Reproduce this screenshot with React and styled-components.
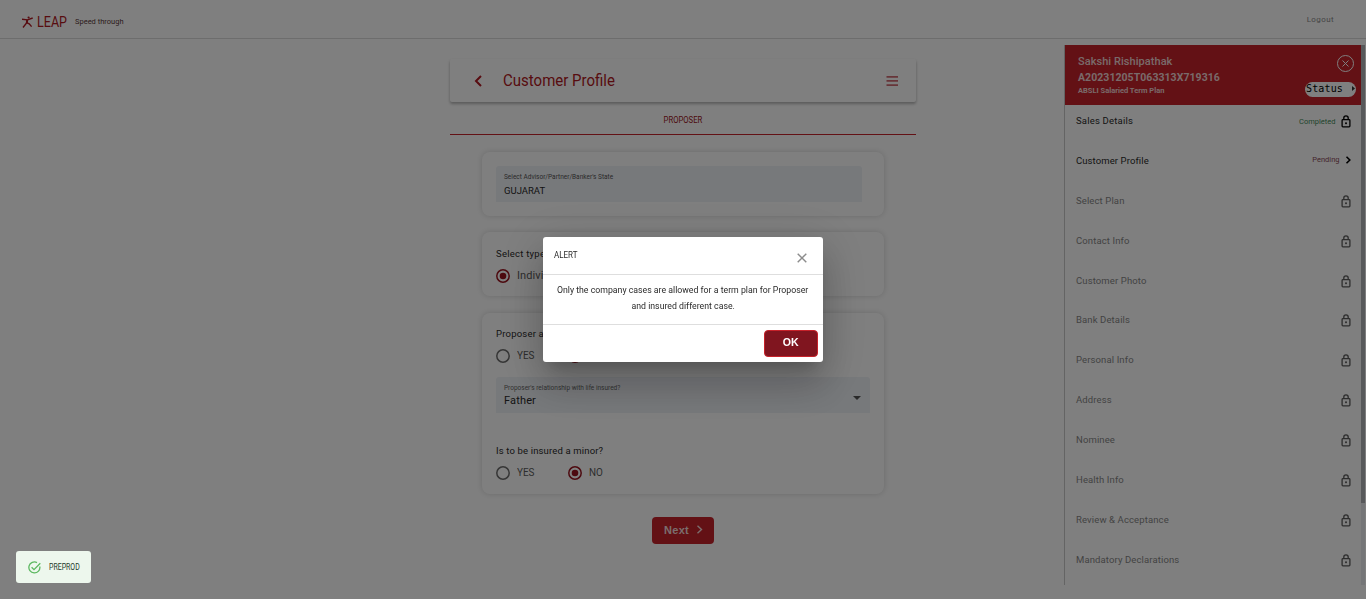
import React from "react";
import styled, { createGlobalStyle } from "styled-components";

const Global = createGlobalStyle`
  * { box-sizing: border-box; }
  body { margin: 0; background: #fff; overflow: hidden; font-family: Roboto, "Liberation Sans", sans-serif; }
  svg { display: block; flex: none; }
`;

const Text = styled.span`
  display: block;
  white-space: nowrap;
  font-family: ${(p) => p.$family || "inherit"};
  font-size: ${(p) => p.$size || 9.5}px;
  line-height: ${(p) => p.$line || 14}px;
  font-weight: ${(p) => p.$weight || 400};
  letter-spacing: ${(p) => p.$track || 0}px;
  color: ${(p) => p.$color || "#2a2a2a"};
  transform: ${(p) => (p.$squeeze ? `scaleX(${p.$squeeze})` : "none")};
  transform-origin: ${(p) => p.$origin || "left"} center;
`;

const Page = styled.div`
  height: 599px;
  display: flex;
  flex-direction: column;
`;
const TopBar = styled.header`
  height: 39px;
  flex: none;
  display: flex;
  align-items: center;
  padding: 5px 32px 0 22px;
  border-bottom: 1px solid #dadada;
`;
const Brand = styled.div`
  display: flex;
  align-items: center;
  gap: 4px;
  width: 53px;
`;
const Logout = styled.div`
  margin-left: auto;
  padding-bottom: 4px;
`;
const Body = styled.div`
  flex: 1;
  display: flex;
  padding-left: 450px;
`;
const Column = styled.main`
  width: 466px;
  padding-top: 20px;
`;
const TitleBar = styled.div`
  height: 43px;
  display: flex;
  align-items: center;
  padding: 0 18px 0 24px;
  border-radius: 2px;
  box-shadow: 0 2px 3px rgba(0, 0, 0, 0.26), 0 1px 4px rgba(0, 0, 0, 0.06);
`;
const TitleText = styled(Text)`
  margin-left: 20px;
  flex: 1;
`;
const Tab = styled.div`
  height: 33px;
  display: flex;
  justify-content: center;
  padding-top: 11px;
  border-bottom: 1px solid #c7222a;
`;
const Cards = styled.div`
  display: flex;
  flex-direction: column;
  gap: 16px;
  padding: 17px 32px 0;
`;
const Card = styled.section`
  height: ${(p) => p.$h}px;
  margin-top: ${(p) => p.$top || 0}px;
  padding: ${(p) => p.$pad || 14}px 14px 0;
  border-radius: 8px;
  box-shadow: 0 0 6px rgba(0, 0, 0, 0.16);
`;
const Field = styled.div`
  width: ${(p) => p.$w}px;
  height: 36px;
  display: flex;
  align-items: center;
  justify-content: space-between;
  padding: 0 9px 1px 8px;
  border-radius: 3px 3px 0 0;
  background: #eff2f7;
`;
const Caret = styled.svg`
  margin-top: 6px;
`;
const RadioRow = styled.div`
  display: flex;
  margin-top: 8px;
`;
const RadioItem = styled.div`
  width: 72px;
  display: flex;
  align-items: center;
  gap: 7px;
`;
const Question = styled.div`
  margin-top: ${(p) => p.$top || 0}px;
`;
const NextButton = styled.button`
  width: 62px;
  height: 27px;
  margin: 23px auto 0;
  display: flex;
  align-items: center;
  justify-content: space-between;
  padding: 0 11px 2px 12px;
  border: 0;
  border-radius: 4px;
  background: #c7222a;
`;
const Side = styled.aside`
  width: 301px;
  height: 540px;
  margin: 6px 1px 0 auto;
  display: flex;
  border-left: 1px solid #c8c8c8;
`;
const SideMain = styled.div`
  width: 296px;
`;
const SideHead = styled.div`
  height: 60px;
  display: flex;
  justify-content: space-between;
  padding: 9px 5px 0 13px;
  background: #c7222a;
`;
const SideActions = styled.div`
  display: flex;
  flex-direction: column;
  align-items: flex-end;
  gap: 9px;
`;
const CircleClose = styled.svg`
  margin-right: 1px;
`;
const Status = styled.button`
  width: 51px;
  height: 15px;
  display: flex;
  align-items: center;
  justify-content: space-between;
  padding: 0 1px 2px 1px;
  border: 0;
  border-radius: 8px;
  background: #fff;
`;
const Row = styled.div`
  height: 39.9px;
  display: flex;
  align-items: flex-start;
  padding: 0 10.5px 0 11px;
`;
const RowEnd = styled.div`
  height: ${(p) => p.$h || 33}px;
  margin-left: auto;
  display: flex;
  align-items: center;
  gap: 5px;
`;
const Track = styled.div`
  width: 4px;
  background: #ebedf1;
`;
const Thumb = styled.div`
  height: 458px;
  background: #b0b3b6;
`;
const Backdrop = styled.div`
  position: fixed;
  inset: 0;
  display: flex;
  align-items: center;
  justify-content: center;
  background: rgba(0, 0, 0, 0.5);
`;
const Dialog = styled.div`
  width: 280px;
  height: 125px;
  display: flex;
  flex-direction: column;
  border-radius: 3px;
  background: #fff;
  box-shadow: 0 11px 15px -7px rgba(0, 0, 0, 0.2), 0 24px 38px 3px rgba(0, 0, 0, 0.14), 0 9px 46px 8px rgba(0, 0, 0, 0.12);
`;
const DialogHead = styled.div`
  height: 38px;
  display: flex;
  align-items: flex-start;
  justify-content: space-between;
  padding: 11px 16px 0 11px;
  border-bottom: 1px solid #dedede;
`;
const CloseIcon = styled.svg`
  margin-top: 5px;
`;
const DialogText = styled.div`
  height: 50px;
  display: flex;
  flex-direction: column;
  align-items: center;
  padding-top: 7px;
  border-bottom: 1px solid #dedede;
`;
const DialogFoot = styled.div`
  display: flex;
  justify-content: flex-end;
  padding: 5px 5px 0 0;
`;
const OkButton = styled.button`
  width: 54px;
  height: 27px;
  display: flex;
  align-items: center;
  justify-content: center;
  padding: 0 0 3px;
  border: 1px solid #c7222a;
  border-radius: 4px;
  background: #80151f;
`;
const Toast = styled.div`
  position: fixed;
  left: 16px;
  bottom: 16px;
  width: 75px;
  height: 32px;
  display: flex;
  align-items: center;
  gap: 8px;
  padding-left: 12px;
  border-radius: 3px;
  background: #edf7ed;
`;

const Lock = ({ dark }) => (
  <svg width="10" height="13" viewBox="0 0 10 13" fill="none" stroke={dark ? "#000" : "#5c5c5c"} strokeWidth="1.3">
    <rect x="1.1" y="4.7" width="7.8" height="7.2" rx="0.8" />
    <path d="M2.8 4.6V3a2.2 2.2 0 0 1 4.4 0v1.6" />
    <path d="M5 7.2v2M4 8.2h2" strokeWidth="1.1" />
  </svg>
);

const Radio = ({ on, label, track, squeeze }) => (
  <RadioItem>
    <svg width="14" height="14" viewBox="0 0 14 14">
      <circle cx="7" cy="7" r="6.2" fill="none" stroke={on ? "#9b1520" : "#6c6c6c"} strokeWidth="1.5" />
      {on && <circle cx="7" cy="7" r="3.3" fill="#9b1520" />}
    </svg>
    <Text $size={11} $line={12} $track={track} $squeeze={squeeze} $color="#5c5c5c">{label}</Text>
  </RadioItem>
);

const RED = "#b01822";
const STEPS = [
  "Select Plan", "Contact Info", "Customer Photo", "Bank Details", "Personal Info",
  "Address", "Nominee", "Health Info", "Review & Acceptance", "Mandatory Declarations",
];

export default function App() {
  return (
    <>
      <Global />
      <Page>
        <TopBar>
          <Brand>
            <svg width="11" height="12" viewBox="0 0 11 12" fill="none" stroke={RED} strokeWidth="1.4">
              <circle cx="6.6" cy="1.5" r="1.1" fill={RED} stroke="none" />
              <path d="M0 3.2l5.5.7L10.7 2M5.5 3.9L4.6 7 1 11.5M4.6 6.6l2.6 1.2 2.4 2.8" />
              <path d="M5.2 3.8L4.8 7" strokeWidth="2" />
            </svg>
            <Text $size={15.5} $line={18} $squeeze={0.81} $color={RED}>LEAP</Text>
          </Brand>
          <Text $size={7.5} $color="#5a3a3a">Speed through</Text>
          <Logout><Text $size={8} $track={0.4} $color="#8a8a8a">Logout</Text></Logout>
        </TopBar>
        <Body>
          <Column>
            <TitleBar>
              <svg width="9" height="12" viewBox="0 0 9 12" fill="none" stroke={RED} strokeWidth="2"><path d="M7 1L2 6l5 5" /></svg>
              <TitleText $size={16.5} $line={20} $squeeze={0.91} $color={RED}>Customer Profile</TitleText>
              <svg width="12" height="10" viewBox="0 0 12 10" fill="#cf6a72"><path d="M.5 0H12v1.7H.5zM.5 4.1H12v1.7H.5zM.5 8.2H12v1.7H.5z" /></svg>
            </TitleBar>
            <Tab><Text $size={9.5} $squeeze={0.81} $origin="center" $color="#9b1520">PROPOSER</Text></Tab>
            <Cards>
              <Card $h={64}>
                <Field $w={366}>
                  <div>
                    <Text $size={6.5} $line={14} $color="#555">Select Advisor/Partner/Banker's State</Text>
                    <Text $size={9.5} $line={13}>GUJARAT</Text>
                  </div>
                </Field>
              </Card>
              <Card $h={64} $pad={15}>
                <Text $track={0.25}>Select type</Text>
                <RadioRow><Radio on label="Individual" track={0.1} /></RadioRow>
              </Card>
              <Card $h={181} $top={1}>
                <Text $track={0.2}>Proposer and</Text>
                <RadioRow><Radio label="YES" squeeze={0.9} /><Radio on label="NO" squeeze={0.9} /></RadioRow>
                <Question $top={14}>
                  <Field $w={374}>
                    <div>
                      <Text $size={6.5} $line={13} $color="#666">Proposer's relationship with life insured?</Text>
                      <Text $size={11} $line={12} $track={0.15}>Father</Text>
                    </div>
                    <Caret width="8" height="4" viewBox="0 0 8 4" fill="#555"><path d="M0 0h8L4 4z" /></Caret>
                  </Field>
                </Question>
                <Question $top={31}>
                  <Text $track={0.15}>Is to be insured a minor?</Text>
                  <RadioRow><Radio label="YES" squeeze={0.9} /><Radio on label="NO" squeeze={0.9} /></RadioRow>
                </Question>
              </Card>
            </Cards>
            <NextButton>
              <Text $size={11} $weight={700} $track={0.3} $color="#f5dcdc">Next</Text>
              <svg width="7" height="9" viewBox="0 0 7 9" fill="none" stroke="#f5dcdc" strokeWidth="1.4"><path d="M1.5 .7l4 3.8-4 3.8" /></svg>
            </NextButton>
          </Column>
          <Side>
            <SideMain>
              <SideHead>
                <div>
                  <Text $size={11} $line={16} $weight={500} $track={0.05} $color="#f2d5d5">Sakshi Rishipathak</Text>
                  <Text $size={10.5} $line={16} $weight={700} $track={0.05} $color="#f2d5d5">A20231205T063313X719316</Text>
                  <Text $size={7.5} $line={10} $weight={700} $color="#f2d5d5">ABSLI Salaried Term Plan</Text>
                </div>
                <SideActions>
                  <CircleClose width="19" height="19" viewBox="0 0 19 19" fill="none" stroke="#fff"><circle cx="9.5" cy="9.5" r="8" /><path d="M6.5 6.5l6 6M12.5 6.5l-6 6" /></CircleClose>
                  <Status>
                    <Text $family="'DejaVu Sans Mono', monospace" $size={10} $line={13} $track={0.15} $color="#000">Status</Text>
                    <svg width="3" height="5" viewBox="0 0 3 5" fill="#333"><path d="M0 0l3 2.5L0 5z" /></svg>
                  </Status>
                </SideActions>
              </SideHead>
              <Row>
                <Text $line={32} $track={0.2}>Sales Details</Text>
                <RowEnd><Text $size={7.5} $color="#3f8a58">Completed</Text><Lock dark /></RowEnd>
              </Row>
              <Row>
                <Text $line={32} $track={0.1}>Customer Profile</Text>
                <RowEnd $h={30}>
                  <Text $size={7.5} $color="#8a4a58">Pending</Text>
                  <svg width="6" height="8" viewBox="0 0 6 8" fill="none" stroke="#000" strokeWidth="1.6"><path d="M1.5 .8L4.8 4 1.5 7.2" /></svg>
                </RowEnd>
              </Row>
              {STEPS.map((name) => (
                <Row key={name}>
                  <Text $line={32} $track={0.12} $color="#868686">{name}</Text>
                  <RowEnd><Lock /></RowEnd>
                </Row>
              ))}
            </SideMain>
            <Track><Thumb /></Track>
          </Side>
        </Body>
      </Page>
      <Backdrop>
        <Dialog>
          <DialogHead>
            <Text $size={9.5} $squeeze={0.84}>ALERT</Text>
            <CloseIcon width="10" height="10" viewBox="0 0 10 10" fill="none" stroke="#8c8c8c" strokeWidth="1.4"><path d="M.7.7l8.6 8.6M9.3.7L.7 9.3" /></CloseIcon>
          </DialogHead>
          <DialogText>
            <Text $size={9.5} $line={16} $squeeze={0.92} $origin="center">Only the company cases are allowed for a term plan for Proposer</Text>
            <Text $size={9.5} $line={16} $squeeze={0.92} $origin="center">and insured different case.</Text>
          </DialogText>
          <DialogFoot>
            <OkButton><Text $size={11.5} $weight={700} $squeeze={0.92} $origin="center" $color="#fff">OK</Text></OkButton>
          </DialogFoot>
        </Dialog>
      </Backdrop>
      <Toast>
        <svg width="13" height="13" viewBox="0 0 13 13" fill="none" stroke="#5cb860" strokeWidth="1.3"><path d="M11.8 5.5A5.5 5.5 0 1 1 9 1.6" /><path d="M3.6 6.2l2.4 2.4L12.3 2.2" /></svg>
        <Text $size={8.5} $squeeze={0.82} $color="#1e3a2a">PREPROD</Text>
      </Toast>
    </>
  );
}
